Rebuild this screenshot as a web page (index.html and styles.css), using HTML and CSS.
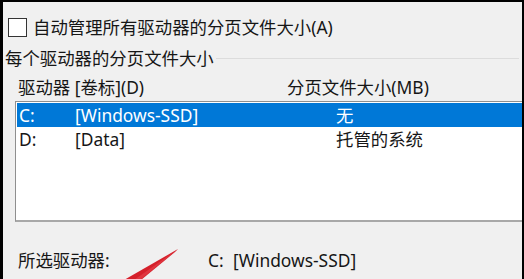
FILE: index.html
```html
<!DOCTYPE html>
<html lang="zh-CN">
<head>
<meta charset="utf-8">
<title>虚拟内存</title>
<link rel="stylesheet" href="styles.css">
</head>
<body>
<div class="screen">
  <div class="win">
    <div class="auto-row">
      <span class="checkbox"></span>
      <span class="auto-label">自动管理所有驱动器的分页文件大小(A)</span>
    </div>
    <div class="group-head">
      <span class="group-label">每个驱动器的分页文件大小</span>
      <span class="group-line"></span>
    </div>
    <div class="col-head">
      <span class="col-drive">驱动器 [卷标](D)</span>
      <span class="col-size">分页文件大小(MB)</span>
    </div>
    <div class="listbox">
      <div class="list-row selected">
        <span class="c-letter">C:</span>
        <span class="c-label">[Windows-SSD]</span>
        <span class="c-size">无</span>
      </div>
      <div class="list-row">
        <span class="c-letter">D:</span>
        <span class="c-label">[Data]</span>
        <span class="c-size">托管的系统</span>
      </div>
    </div>
    <div class="sel-row">
      <span class="sel-label">所选驱动器:</span>
      <span class="sel-letter">C:</span>
      <span class="sel-value">[Windows-SSD]</span>
    </div>
  </div>
  <svg class="arrow" width="80" height="40" viewBox="0 0 80 40" aria-hidden="true">
    <polygon points="68,9 65,12 31,40 14,40" fill="#d5202b"/>
    <polygon points="68,9 30,40 24,40" fill="#e8454d" opacity="0.6"/>
  </svg>
</div>
</body>
</html>
```

FILE: styles.css
```css
html, body {
  margin: 0;
  padding: 0;
  background: #000;
}

.screen {
  position: relative;
  width: 524px;
  height: 279px;
  padding: 2px 2px 0 3px;
  box-sizing: border-box;
  background: #000;
  overflow: hidden;
}

.win {
  height: 277px;
  background: #f0f0f0;
  overflow: hidden;
  font-family: "Noto Sans", "Noto Sans CJK SC", sans-serif;
  font-size: 17.4px;
  color: #161616;
}

.auto-row {
  display: flex;
  align-items: center;
  height: 22px;
  margin-top: 14px;
  padding-left: 5px;
}

.checkbox {
  width: 17px;
  height: 17px;
  border: 1px solid #333;
  background: #fff;
  flex: none;
}

.auto-label {
  margin-left: 6px;
  line-height: 22px;
  white-space: nowrap;
}

.group-head {
  display: flex;
  align-items: center;
  height: 22px;
  margin-top: 9px;
  padding-left: 2px;
}

.group-label {
  line-height: 22px;
  white-space: nowrap;
}

.group-line {
  flex: 1;
  height: 1px;
  background: #dcdcdc;
  margin-left: 2px;
  margin-right: 3px;
  border-right: 1px solid #dcdcdc;
}

.col-head {
  display: flex;
  height: 22px;
  line-height: 22px;
  margin-top: 7px;
  padding-left: 15px;
  white-space: nowrap;
}

.col-drive {
  width: 269px;
  flex: none;
}

.listbox {
  margin-top: 3px;
  margin-left: 12px;
  margin-right: -10px;
  height: 117px;
  background: #fff;
  border-top: 1px solid #8f8f8f;
  border-left: 1px solid #8f8f8f;
  border-bottom: 2px solid #a8a8a8;
  padding: 1px 0 0 1px;
  box-sizing: content-box;
}

.list-row {
  display: flex;
  height: 24px;
  line-height: 24px;
  padding-left: 2px;
  white-space: nowrap;
}

.list-row.selected {
  background: #0078d7;
  color: #fff;
}

.c-letter {
  width: 56px;
  flex: none;
}

.c-label {
  width: 261px;
  flex: none;
}

.sel-row {
  display: flex;
  height: 22px;
  line-height: 22px;
  margin-top: 27px;
  padding-left: 15px;
  white-space: nowrap;
}

.sel-label {
  width: 190px;
  flex: none;
}

.sel-letter {
  width: 25px;
  flex: none;
}

.arrow {
  position: absolute;
  left: 110px;
  top: 240px;
}
```
